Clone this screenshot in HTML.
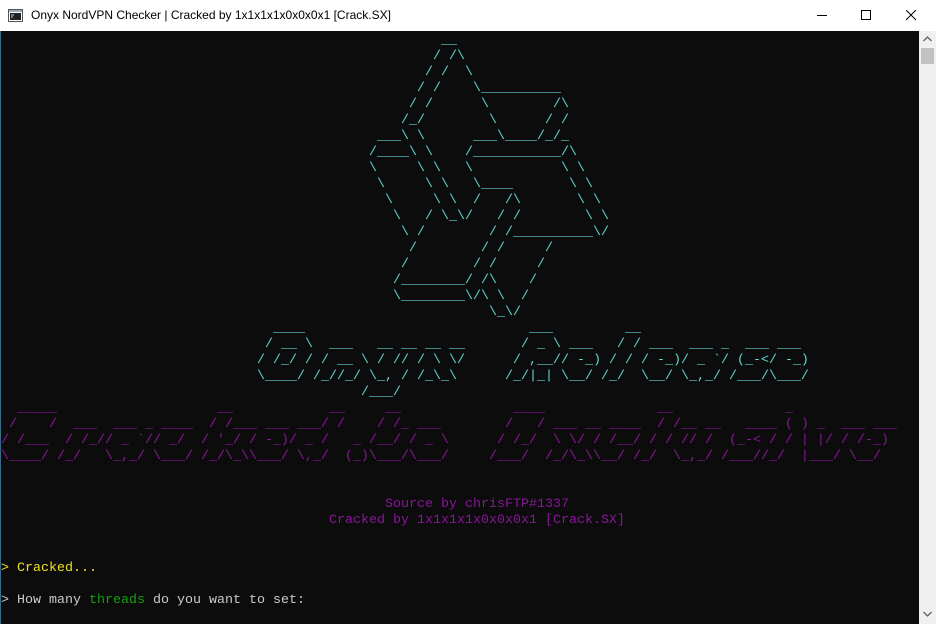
<!DOCTYPE html>
<html><head><meta charset="utf-8">
<style>
*{margin:0;padding:0;box-sizing:border-box}
html,body{width:936px;height:624px;overflow:hidden;background:#0c0c0c}
#title{position:absolute;left:0;top:0;width:936px;height:31px;background:#fff;font-family:"Liberation Sans",sans-serif;font-size:12px;color:#000}
#title .t{position:absolute;left:31px;top:8px;white-space:pre}
#con{position:absolute;left:0;top:31px;width:919px;height:593px;background:#0c0c0c;border-left:1px solid #3a6b8a}
#sb{position:absolute;left:919px;top:31px;width:17px;height:593px;background:#f0f0f0}
i{position:absolute;font-style:normal;white-space:pre;font-family:"Liberation Mono",monospace;font-size:13.33px;line-height:16px;height:16px;margin-top:2px}
.c{color:#61d6d6}.p{color:#881798}.g{color:#cccccc}.y{color:#f0e020}.gr{color:#13a10e}
</style></head><body>
<div id="title">
<svg style="position:absolute;left:8px;top:8px" width="15" height="15" viewBox="0 0 15 15"><rect x="0.5" y="1.5" width="14" height="12" fill="#fff" stroke="#555"/><rect x="1" y="2" width="13" height="2" fill="#9ab"/><rect x="2" y="5" width="11" height="7" fill="#222"/><path d="M3 7h3M3 9h2" stroke="#ccc"/></svg>
<span class="t">Onyx NordVPN Checker | Cracked by 1x1x1x1x0x0x0x1 [Crack.SX]</span>
<svg style="position:absolute;left:817px;top:10px" width="11" height="11"><path d="M0 5.5h10" stroke="#000"/></svg>
<svg style="position:absolute;left:861px;top:10px" width="11" height="11"><rect x="0.5" y="0.5" width="9" height="9" fill="none" stroke="#000"/></svg>
<svg style="position:absolute;left:906px;top:10px" width="11" height="11"><path d="M0 0L10 10M10 0L0 10" stroke="#000"/></svg>
</div>
<div id="con"></div>
<div id="sb">
<svg style="position:absolute;left:4px;top:5px" width="9" height="6"><path d="M0.5 5L4.5 1L8.5 5" fill="none" stroke="#606060" stroke-width="1.3"/></svg>
<div style="position:absolute;left:2px;top:17px;width:13px;height:16px;background:#c1c1c1"></div>
<svg style="position:absolute;left:4px;top:580px" width="9" height="6"><path d="M0.5 1L4.5 5L8.5 1" fill="none" stroke="#606060" stroke-width="1.3"/></svg>
</div>
<div id="art">
<i class="c" style="left:441px;top:31px">__</i>
<i class="c" style="left:433px;top:47px">/ /\</i>
<i class="c" style="left:425px;top:63px">/ /  \</i>
<i class="c" style="left:417px;top:79px">/ /    \__________</i>
<i class="c" style="left:409px;top:95px">/ /      \        /\</i>
<i class="c" style="left:401px;top:111px">/_/        \      / /</i>
<i class="c" style="left:377px;top:127px">___\ \      ___\____/_/_</i>
<i class="c" style="left:369px;top:143px">/____\ \    /___________/\</i>
<i class="c" style="left:369px;top:159px">\     \ \   \           \ \</i>
<i class="c" style="left:377px;top:175px">\     \ \   \____       \ \</i>
<i class="c" style="left:385px;top:191px">\     \ \  /   /\       \ \</i>
<i class="c" style="left:393px;top:207px">\   / \_\/   / /        \ \</i>
<i class="c" style="left:401px;top:223px">\ /        / /__________\/</i>
<i class="c" style="left:409px;top:239px">/        / /     /</i>
<i class="c" style="left:401px;top:255px">/        / /     /</i>
<i class="c" style="left:393px;top:271px">/________/ /\    /</i>
<i class="c" style="left:393px;top:287px">\________\/\ \  /</i>
<i class="c" style="left:489px;top:303px">\_\/</i>
<i class="c" style="left:273px;top:319px">____</i>
<i class="c" style="left:529px;top:319px">___</i>
<i class="c" style="left:625px;top:319px">__</i>
<i class="c" style="left:265px;top:335px">/ __ \  ___   __ __ __ __</i>
<i class="c" style="left:521px;top:335px">/ _ \ ___   / / ___  ___ _  ___ ___</i>
<i class="c" style="left:257px;top:351px">/ /_/ / / __ \ / // / \ \/</i>
<i class="c" style="left:513px;top:351px">/ ,__// -_) / / / -_)/ _ `/ (_-&lt;/ -_)</i>
<i class="c" style="left:257px;top:367px">\____/ /_//_/ \_, / /_\_\</i>
<i class="c" style="left:505px;top:367px">/_/|_| \__/ /_/  \__/ \_,_/ /___/\___/</i>
<i class="c" style="left:361px;top:383px">/___/</i>
<i class="p" style="left:17px;top:399px">_____</i>
<i class="p" style="left:217px;top:399px">__</i>
<i class="p" style="left:329px;top:399px">__</i>
<i class="p" style="left:385px;top:399px">__</i>
<i class="p" style="left:513px;top:399px">____</i>
<i class="p" style="left:657px;top:399px">__</i>
<i class="p" style="left:785px;top:399px">_</i>
<i class="p" style="left:9px;top:415px">/    /  ___  ___ _ ____  / /___ ___ ___/ /    / /_ ___</i>
<i class="p" style="left:505px;top:415px">/   / ___ __ ____  / /__ __   ____ ( ) _  ___ ___</i>
<i class="p" style="left:1px;top:431px">/ /___  / /_// _ `// _/  / '_/ / -_)/ _ /   _ /__/ / _ \</i>
<i class="p" style="left:497px;top:431px">/ /_/  \ \/ / /__/ / / // /  (_-&lt; / / | |/ / /-_)</i>
<i class="p" style="left:1px;top:447px">\____/ /_/   \_,_/ \___/ /_/\_\\___/ \,_/  (_)\___/\___/</i>
<i class="p" style="left:489px;top:447px">/___/  /_/\_\\__/ /_/  \_,_/ /___//_/  |___/ \__/</i>
<i class="p" style="left:385px;top:495px">Source by chrisFTP#1337</i>
<i class="p" style="left:329px;top:511px">Cracked by 1x1x1x1x0x0x0x1 [Crack.SX]</i>
<i class="y" style="left:1px;top:559px">&gt; Cracked...</i>
<i class="g" style="left:1px;top:591px">&gt; How many <span class="gr">threads</span> do you want to set:</i>
</div>
</body></html>
